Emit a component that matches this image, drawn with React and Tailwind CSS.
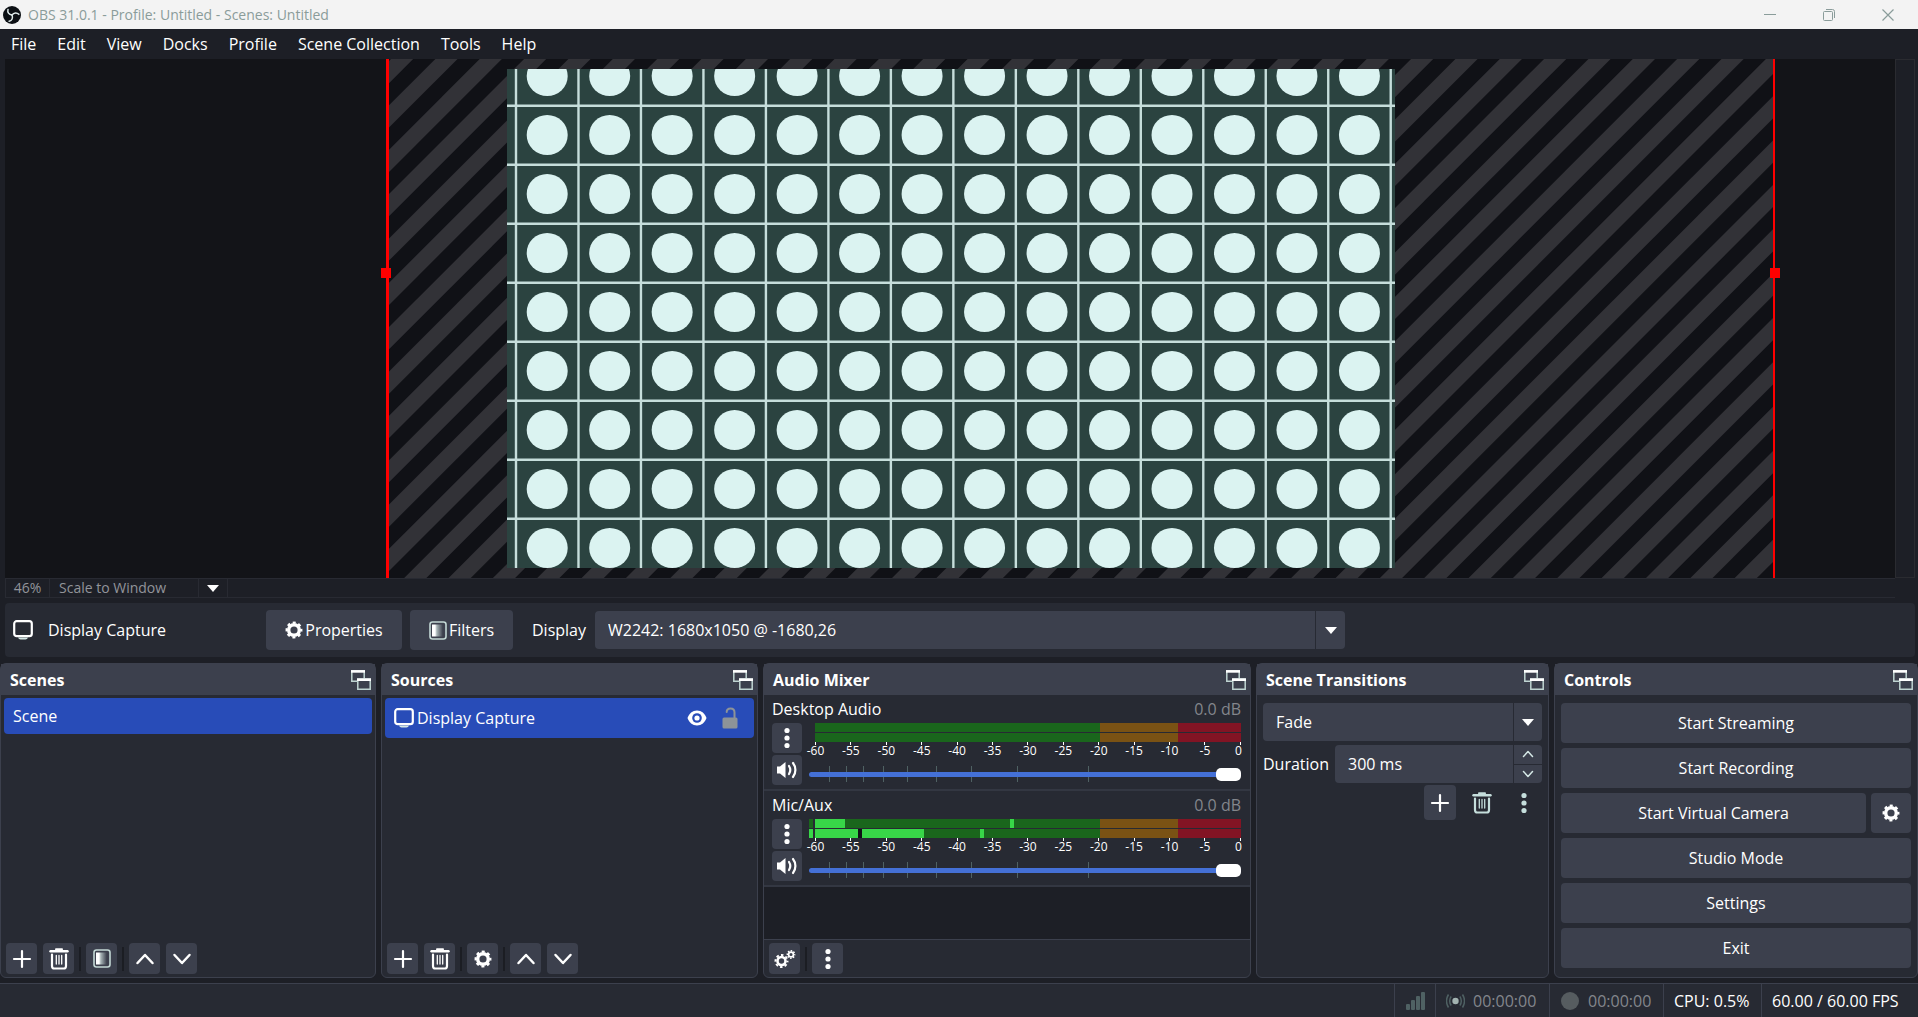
import React, { useState } from 'react';

const MENU_ITEMS = ['File', 'Edit', 'View', 'Docks', 'Profile', 'Scene Collection', 'Tools', 'Help'];
const DB_MARKS = [-60, -55, -50, -45, -40, -35, -30, -25, -20, -15, -10, -5, 0];

// Fader marks, in units of a 431 wide slider
const FADER_MARKS = [20, 37, 54, 74, 98, 127, 162, 208, 278];

/* ---------- Icons ---------- */

const ObsLogo = () => (
  <svg width="18" height="18" viewBox="0 0 18 18" fill="none" stroke="#dfeaea" strokeWidth="1.5" strokeLinecap="round">
    <circle cx="9" cy="9" r="9" fill="#0c1014" stroke="none" />
    <path d="M9 9C5.800 8.600 4.200 6.200 5 3.400" />
    <path d="M9 9C5.800 8.600 4.200 6.200 5 3.400" transform="rotate(120 9 9)" />
    <path d="M9 9C5.800 8.600 4.200 6.200 5 3.400" transform="rotate(240 9 9)" />
  </svg>
);

const PlusIcon = () => (
  <svg width="20" height="20" viewBox="0 0 20 20" fill="none" stroke="currentColor" strokeWidth="2.2" strokeLinecap="round">
    <path d="M10 2v16M2 10h16" />
  </svg>
);

const TrashIcon = () => (
  <svg width="20" height="22" viewBox="0 0 20 22" fill="none" stroke="currentColor" strokeLinecap="round">
    <path d="M1.5 3.2h17" strokeWidth="2.4" />
    <path d="M7 1.2h6" strokeWidth="2" />
    <path d="M3 6.5v11.4c0 1.5.9 2.6 2.4 2.6h9.2c1.5 0 2.4-1.1 2.4-2.6V6.5" strokeWidth="2.2" />
    <path d="M7.3 7.5v8.5M10 7.5v8.5M12.7 7.500v8.500" strokeWidth="1.3" />
  </svg>
);

const ChevronIcon = ({ down, size = 20 }) => (
  <svg width={size} height={size} viewBox="0 0 20 20" fill="none" stroke="currentColor" strokeWidth="2.5" strokeLinecap="round" strokeLinejoin="round">
    <path d={down ? 'M2.5 6l7.5 8 7.5-8' : 'M2.5 14l7.5-8 7.5 8'} />
  </svg>
);

const GearIcon = ({ size = 20 }) => (
  <svg width={size} height={size} viewBox="0 0 20 20" fill="none" stroke="currentColor">
    <circle cx="10" cy="10" r="5.9" strokeWidth="3.8" />
    <circle cx="10" cy="10" r="8.2" strokeWidth="2.4" strokeDasharray="3.4 3.04" strokeDashoffset="1.7" />
  </svg>
);

const GearsIcon = () => (
  <svg width="22" height="20" viewBox="0 0 22 20" fill="none" stroke="currentColor">
    <circle cx="7.5" cy="12" r="4" strokeWidth="2.6" />
    <circle cx="7.5" cy="12" r="6" strokeWidth="2" strokeDasharray="2.5 2.21" strokeDashoffset="1.25" />
    <circle cx="17" cy="5.5" r="2.4" strokeWidth="1.7" />
    <circle cx="17" cy="5.5" r="3.7" strokeWidth="1.4" strokeDasharray="1.6 1.3" strokeDashoffset=".8" />
  </svg>
);

const FilterIcon = () => (
  <svg width="18" height="19" viewBox="0 0 18 19" fill="none">
    <defs>
      <linearGradient id="filterFade">
        <stop offset="0.25" stopColor="#fff" />
        <stop offset="0.4" stopColor="#a9b6b8" />
        <stop offset="0.9" stopColor="#3c404d" />
      </linearGradient>
    </defs>
    <rect x="1" y="1" width="16" height="17" rx="2.5" stroke="#c3d8d5" strokeWidth="1.6" />
    <rect x="3" y="3.5" width="12" height="12" fill="url(#filterFade)" />
  </svg>
);

const DisplayIcon = () => (
  <svg width="20" height="20" viewBox="0 0 20 20" fill="none">
    <rect x="1.2" y="1.2" width="17.6" height="15" rx="2.5" stroke="#fff" strokeWidth="2.2" />
    <path d="M5 17.5h10c-.5 1.3-1.5 2-2.5 2h-5c-1 0-2-.7-2.5-2z" fill="#d5e8e6" />
  </svg>
);

const DotsIcon = () => (
  <svg width="6" height="22" viewBox="0 0 6 22" fill="currentColor">
    <circle cx="3" cy="3.5" r="2.6" />
    <circle cx="3" cy="11" r="2.6" />
    <circle cx="3" cy="18.5" r="2.6" />
  </svg>
);

const SpeakerIcon = () => (
  <svg width="22" height="20" viewBox="0 0 22 20" fill="none" stroke="#fff" strokeWidth="2.2" strokeLinecap="round">
    <path d="M1 6.5h3L9.5 2v16L4 13.500H1z" fill="#fff" stroke="none" />
    <path d="M13 6c1.5 2.300 1.500 5.700 0 8" />
    <path d="M17 3c3.200 4 3.200 10 0 14" />
  </svg>
);

const EyeIcon = () => (
  <svg width="20" height="16" viewBox="0 0 20 16">
    <path d="M10 .5C5.500.5 2 3.500.5 8 2 12.500 5.500 15.500 10 15.500s8-3 9.500-7.500C18 3.500 14.500.5 10 .5z" fill="#fff" />
    <circle cx="10" cy="8" r="4.8" fill="#284cb8" />
    <circle cx="10" cy="8" r="2.6" fill="#fff" />
  </svg>
);

const UnlockIcon = () => (
  <svg width="16" height="22" viewBox="0 0 16 22" fill="none">
    <rect x="0.5" y="10.5" width="15" height="11" rx="1.5" fill="#8d9398" />
    <path d="M12.5 10.5V5.500c0-2.500-1.500-4-4-4s-3.800 1.300-3.800 3.500" stroke="#8d9398" strokeWidth="2" strokeLinecap="round" />
  </svg>
);

const PopoutIcon = () => (
  <svg width="20" height="20" viewBox="0 0 20 20" fill="none">
    <path d="M6 11.200H.8V1h12.400v7.500" stroke="#bfd4d2" strokeWidth="1.5" />
    <path d="M0 1.400h14" stroke="#fff" strokeWidth="2.6" />
    <path d="M6.800 9v10.200h12.400V9z" stroke="#bfd4d2" strokeWidth="1.5" />
    <path d="M6 9.700h14" stroke="#fff" strokeWidth="2.6" />
  </svg>
);

const CaretIcon = () => (
  <svg width="12" height="7" viewBox="0 0 12 7" fill="#fff">
    <path d="M0 0h12L6 7z" />
  </svg>
);

/* ---------- Shared pieces ---------- */

const ToolButton = ({ label, children }) => (
  <button type="button" aria-label={label} className="flex size-[31px] items-center justify-center rounded bg-[#3c404d] text-white">
    {children}
  </button>
);

const ToolDivider = () => <span className="-mx-px h-6 w-0.5 bg-[#1b1d23]" />;

const Dock = ({ title, children }) => (
  <section className="flex min-w-0 flex-col rounded-md border border-[#3c404d] bg-[#272a33]">
    <header className="flex h-[31px] items-center justify-between bg-[#3c404d] pr-1 pl-[9px]">
      <h2 className="text-base font-bold">{title}</h2>
      <button type="button" aria-label={`Undock ${title}`}>
        <PopoutIcon />
      </button>
    </header>
    {children}
  </section>
);

const DockToolbar = ({ children }) => <div className="flex items-center gap-1.5 px-[5px] py-[3px]">{children}</div>;

/* ---------- Preview ---------- */

const Preview = () => {
  const stripes = Array.from({ length: 46 }, (_, i) => 386 + i * 44.35);
  const columns = Array.from({ length: 15 }, (_, i) => 511 + i * 62.48);
  const rows = Array.from({ length: 9 }, (_, i) => 17 + i * 59);

  return (
    <svg className="absolute inset-0 size-full" viewBox="0 0 1890 519" preserveAspectRatio="xMidYMid slice">
      <defs>
        <clipPath id="canvasClip">
          <rect x="383" y="0" width="1386" height="519" />
        </clipPath>
        <clipPath id="captureClip">
          <rect x="502" y="10" width="888" height="499" />
        </clipPath>
      </defs>
      <g clipPath="url(#canvasClip)">
        <rect x="383" width="1386" height="519" fill="#101116" />
        {stripes.map((x) => (
          <path key={x} d={`M${x} 0h22.2l-519 519h-22.2z`} fill="#323237" />
        ))}
      </g>
      <g clipPath="url(#captureClip)">
        <rect x="502" y="10" width="888" height="499" fill="#2b4340" />
        {columns.map((x) => (
          <path key={x} d={`M${x} 10v499`} stroke="#c6dedb" strokeWidth="2.4" />
        ))}
        {rows.map((y) => (
          <path key={y} d={`M502 ${y + 29.7}h888`} stroke="#c6dedb" strokeWidth="2.4" />
        ))}
        {rows.map((y) =>
          columns.slice(0, 14).map((x) => <ellipse key={`${x}-${y}`} cx={x + 31.2} cy={y} rx="20.5" ry="20" fill="#dbf3f1" />)
        )}
      </g>
      <g fill="#f00">
        <rect x="381" width="3" height="519" />
        <rect x="376" y="209" width="10" height="10" />
        <rect x="1768" width="2" height="519" />
        <rect x="1765" y="209" width="10" height="10" />
      </g>
    </svg>
  );
};

/* ---------- Mixer ---------- */

const MeterBar = ({ levels = [] }) => (
  <div className="relative flex h-[9px]">
    <span className="w-[284px] grow-[284] bg-[#1a661c]" />
    <span className="w-[78px] grow-[78] bg-[#7a5214]" />
    <span className="w-[63px] grow-[63] bg-[#821424]" />
    {levels.map(([from, to, color]) => (
      <span
        key={from}
        className="absolute inset-y-0"
        style={{ left: `${(from / 425) * 100}%`, width: `${((to - from) / 425) * 100}%`, background: color }}
      />
    ))}
  </div>
);

const MixerChannel = ({ name, levels }) => {
  const [volume, setVolume] = useState(100);

  return (
    <div className="flex h-24 flex-col border-b-2 border-[#333742] pr-[9px] pl-2">
      <div className="flex h-7 items-center justify-between">
        <span>{name}</span>
        <span className="text-[#83868c]">0.0 dB</span>
      </div>
      <div className="flex gap-[7px]">
        <div className="flex flex-col gap-0.5">
          <button type="button" aria-label={`${name} options`} className="flex size-[30px] items-center justify-center rounded bg-[#3c404d]">
            <DotsIcon />
          </button>
          <button type="button" aria-label={`Mute ${name}`} className="flex size-[30px] items-center justify-center rounded bg-[#3c404d]">
            <SpeakerIcon />
          </button>
        </div>
        <div className="flex min-w-0 grow flex-col">
          <div className="flex flex-col gap-px pl-1.5">
            <MeterBar levels={levels?.[0]} />
            <MeterBar levels={levels?.[1]} />
            <div className="flex justify-between text-xs leading-3">
              {DB_MARKS.map((db) => (
                <span key={db} className="flex w-px flex-col items-center">
                  <i className="-mt-px h-[3px] w-px bg-white" />
                  <span className={db === 0 ? 'pr-1' : ''}>{db}</span>
                </span>
              ))}
            </div>
          </div>
          <div className="relative mt-[9px] flex h-4 items-center">
            {FADER_MARKS.map((mark) => (
              <i key={mark} className="absolute inset-y-0 w-px bg-[#4f6163]" style={{ left: `${(mark / 431) * 100}%` }} />
            ))}
            <input
              type="range"
              aria-label={`${name} volume`}
              value={volume}
              onChange={(e) => setVolume(e.target.value)}
              className="relative h-[5px] w-full appearance-none rounded bg-[#4470d6] outline-none [&::-webkit-slider-thumb]:h-[13px] [&::-webkit-slider-thumb]:w-[25px] [&::-webkit-slider-thumb]:appearance-none [&::-webkit-slider-thumb]:rounded-[5px] [&::-webkit-slider-thumb]:bg-white"
            />
          </div>
        </div>
      </div>
    </div>
  );
};

// [from, to, color] segments of each meter bar, in meter units
const MIC_LEVELS = [
  [
    [-6, -2, '#1a661c'],
    [0, 30, '#38d648'],
    [195, 199, '#38d648']
  ],
  [
    [-6, -2, '#38d648'],
    [0, 43, '#38d648'],
    [43, 47, '#101116'],
    [47, 109, '#38d648'],
    [165, 169, '#38d648']
  ]
];

const ControlButton = ({ children }) => (
  <button type="button" className="h-10 grow rounded bg-[#3c404d]">
    {children}
  </button>
);

const App = () => {
  const [duration, setDuration] = useState(300);

  return (
    <div className="flex min-h-screen flex-col bg-[#1d1f26] font-['Open_Sans','Noto_Sans',sans-serif] text-base text-white">
      {/* Title bar */}
      <div className="flex h-[29px] items-center bg-[#f3f3f3] pl-[3px] text-[#8a9c9a]">
        <ObsLogo />
        <h1 className="ml-[7px] grow text-sm">OBS 31.0.1 - Profile: Untitled - Scenes: Untitled</h1>
        <div className="flex items-center gap-[47px] pr-6">
          <button type="button" aria-label="Minimize">
            <svg width="12" height="12" viewBox="0 0 12 12" stroke="currentColor">
              <path d="M0 5.5h12" />
            </svg>
          </button>
          <button type="button" aria-label="Restore">
            <svg width="12" height="12" viewBox="0 0 12 12" fill="none" stroke="currentColor">
              <rect x="0.5" y="2.5" width="9" height="9" rx="1" />
              <path d="M3 .5h6.500a2 2 0 0 1 2 2V9" />
            </svg>
          </button>
          <button type="button" aria-label="Close">
            <svg width="12" height="12" viewBox="0 0 12 12" stroke="currentColor" strokeWidth="1.2">
              <path d="M.5.5l11 11M11.500.5l-11 11" />
            </svg>
          </button>
        </div>
      </div>

      {/* Menu bar */}
      <nav className="flex h-[30px] items-center gap-[21px] pl-[11px]">
        {MENU_ITEMS.map((item) => (
          <button key={item} type="button">
            {item}
          </button>
        ))}
      </nav>

      {/* Preview with its scroll gutter */}
      <div className="flex grow pr-[3px] pl-[5px]">
        <div className="flex grow flex-col">
          <div className="relative grow overflow-hidden bg-[#131418]">
            <Preview />
          </div>
          <div className="flex h-5 items-stretch border-y border-l border-[#282a32] text-sm leading-[18px] text-[#92949a]">
            <span className="w-11 border-r border-[#282a32] text-center">46%</span>
            <label className="relative flex w-[178px] border-r border-[#282a32]">
              <select aria-label="Preview scaling" className="w-full appearance-none pl-[9px] outline-none">
                <option>Scale to Window</option>
              </select>
              <span className="pointer-events-none absolute inset-y-0 right-0 flex w-[29px] items-center justify-center border-l border-[#282a32]">
                <CaretIcon />
              </span>
            </label>
          </div>
        </div>
        <div className="mb-5 w-5 border border-[#2a2b30]" />
      </div>

      {/* Source toolbar */}
      <div className="mt-[5px] mr-[3px] ml-[5px] flex h-[54px] items-center rounded bg-[#272a33] pl-2">
        <DisplayIcon />
        <span className="ml-[15px] w-[218px]">Display Capture</span>
        <button type="button" className="flex h-10 w-[136px] items-center justify-center gap-0.5 rounded bg-[#3c404d]">
          <GearIcon size={18} />
          Properties
        </button>
        <button type="button" className="ml-2 flex h-10 w-[103px] items-center justify-center gap-0.5 rounded bg-[#3c404d]">
          <FilterIcon />
          Filters
        </button>
        <label htmlFor="display" className="ml-[19px] w-[63px]">
          Display
        </label>
        <div className="relative flex h-[38px] w-[750px] rounded bg-[#3c404d]">
          <select id="display" className="w-full appearance-none pl-[13px] outline-none">
            <option>W2242: 1680x1050 @ -1680,26</option>
          </select>
          <span className="pointer-events-none absolute inset-y-0 right-0 flex w-[30px] items-center justify-center border-l border-[#272a33]">
            <CaretIcon />
          </span>
        </div>
      </div>

      {/* Docks */}
      <main className="mt-1.5 grid grid-cols-[minmax(0,376fr)_minmax(0,377fr)_minmax(0,488fr)_minmax(0,293fr)_minmax(0,364fr)] gap-[5px]">
        <Dock title="Scenes">
          <ul className="grow px-[3px] pt-[3px]">
            <li className="flex h-9 items-center rounded bg-[#284cb8] pl-[9px]">Scene</li>
          </ul>
          <DockToolbar>
            <ToolButton label="Add scene"><PlusIcon /></ToolButton>
            <ToolButton label="Remove scene"><TrashIcon /></ToolButton>
            <ToolDivider />
            <ToolButton label="Scene filters"><FilterIcon /></ToolButton>
            <ToolDivider />
            <ToolButton label="Move scene up"><ChevronIcon /></ToolButton>
            <ToolButton label="Move scene down"><ChevronIcon down /></ToolButton>
          </DockToolbar>
        </Dock>

        <Dock title="Sources">
          <ul className="grow px-[3px] pt-[3px]">
            <li className="flex h-10 items-center rounded bg-[#284cb8] pr-4 pl-[9px]">
              <DisplayIcon />
              <span className="ml-[3px] grow">Display Capture</span>
              <button type="button" aria-label="Hide source" className="mr-[15px]"><EyeIcon /></button>
              <button type="button" aria-label="Lock source"><UnlockIcon /></button>
            </li>
          </ul>
          <DockToolbar>
            <ToolButton label="Add source"><PlusIcon /></ToolButton>
            <ToolButton label="Remove source"><TrashIcon /></ToolButton>
            <ToolDivider />
            <ToolButton label="Source properties"><GearIcon size={18} /></ToolButton>
            <ToolDivider />
            <ToolButton label="Move source up"><ChevronIcon /></ToolButton>
            <ToolButton label="Move source down"><ChevronIcon down /></ToolButton>
          </DockToolbar>
        </Dock>

        <Dock title="Audio Mixer">
          <MixerChannel name="Desktop Audio" />
          <MixerChannel name="Mic/Aux" levels={MIC_LEVELS} />
          <div className="grow border-b border-[#3c404d] bg-[#1d1f26]" />
          <DockToolbar>
            <ToolButton label="Advanced audio properties"><GearsIcon /></ToolButton>
            <ToolDivider />
            <ToolButton label="Mixer menu"><DotsIcon /></ToolButton>
          </DockToolbar>
        </Dock>

        <Dock title="Scene Transitions">
          <div className="flex flex-col gap-1 px-1.5 pt-2">
            <div className="relative flex h-[38px] rounded bg-[#3c404d]">
              <select aria-label="Transition" className="w-full appearance-none pl-[13px] outline-none">
                <option>Fade</option>
              </select>
              <span className="pointer-events-none absolute inset-y-0 right-0 flex w-[29px] items-center justify-center border-l border-[#272a33]">
                <CaretIcon />
              </span>
            </div>
            <div className="flex items-center">
              <label htmlFor="duration" className="w-[72px] shrink-0">Duration</label>
              <div className="flex h-[38px] min-w-0 grow rounded bg-[#3c404d]">
                <input id="duration" readOnly value={`${duration} ms`} className="w-full min-w-0 grow pl-[13px] outline-none" />
                <div className="flex w-[29px] shrink-0 flex-col border-l border-[#272a33] text-[#d5e8e6]">
                  <button type="button" aria-label="Increase duration" onClick={() => setDuration(duration + 50)} className="flex grow items-center justify-center">
                    <ChevronIcon size={12} />
                  </button>
                  <button type="button" aria-label="Decrease duration" onClick={() => setDuration(duration - 50)} className="flex grow items-center justify-center border-t border-[#272a33]">
                    <ChevronIcon down size={12} />
                  </button>
                </div>
              </div>
            </div>
          </div>
          <div className="mt-0.5 flex justify-end gap-[10px] pr-2 text-[#c5dedc]">
            <button type="button" aria-label="Add transition" className="flex h-[35px] w-8 items-center justify-center rounded bg-[#3c404d] text-white">
              <PlusIcon />
            </button>
            <button type="button" aria-label="Remove transition" className="flex h-[35px] w-8 items-center justify-center">
              <TrashIcon />
            </button>
            <button type="button" aria-label="Transition menu" className="flex h-[35px] w-8 items-center justify-center">
              <DotsIcon />
            </button>
          </div>
        </Dock>

        <Dock title="Controls">
          <div className="flex flex-col gap-[5px] px-1.5 pt-2 pb-[9px]">
            <ControlButton>Start Streaming</ControlButton>
            <ControlButton>Start Recording</ControlButton>
            <div className="flex gap-[5px]">
              <ControlButton>Start Virtual Camera</ControlButton>
              <button type="button" aria-label="Virtual camera settings" className="flex size-10 items-center justify-center rounded bg-[#3c404d]">
                <GearIcon size={18} />
              </button>
            </div>
            <ControlButton>Studio Mode</ControlButton>
            <ControlButton>Settings</ControlButton>
            <ControlButton>Exit</ControlButton>
          </div>
        </Dock>
      </main>

      {/* Status bar */}
      <footer className="mt-[5px] flex h-[34px] items-stretch justify-end border-t border-[#3c404d] bg-[#272a33] pr-1.5">
        <span className="flex w-[41px] items-center justify-center border-l border-[#3c404d]">
          <svg width="19" height="18" viewBox="0 0 19 18" fill="#4f6163">
            <rect x="0" y="12" width="4" height="6" rx="1" />
            <rect x="5" y="8" width="4" height="10" rx="1" />
            <rect x="10" y="4" width="4" height="14" rx="1" />
            <rect x="15" y="0" width="4" height="18" rx="1" />
          </svg>
        </span>
        <span className="flex w-[114px] items-center gap-2 border-l border-[#3c404d] pl-[10px] text-[#83868c]">
          <svg width="19" height="16" viewBox="0 0 19 16" fill="none" stroke="#4f6163" strokeWidth="1.5">
            <circle cx="9.5" cy="8" r="3.2" fill="#a3b3b1" stroke="none" />
            <path d="M5.200 3.500c-2 2.500-2 6.500 0 9M13.800 3.500c2 2.500 2 6.500 0 9M2.500 1.500c-2.500 4-2.500 9 0 13M16.500 1.500c2.500 4 2.500 9 0 13" />
          </svg>
          00:00:00
        </span>
        <span className="flex w-[114px] items-center gap-[9px] border-l border-[#3c404d] pl-[11px] text-[#83868c]">
          <span className="size-[18px] rounded-full bg-[#565c60]" />
          00:00:00
        </span>
        <span className="flex w-[98px] items-center border-l border-[#3c404d] pl-[10px]">CPU: 0.5%</span>
        <span className="flex w-[151px] items-center border-l border-[#3c404d] pl-[10px]">60.00 / 60.00 FPS</span>
      </footer>
    </div>
  );
};

export default App;
